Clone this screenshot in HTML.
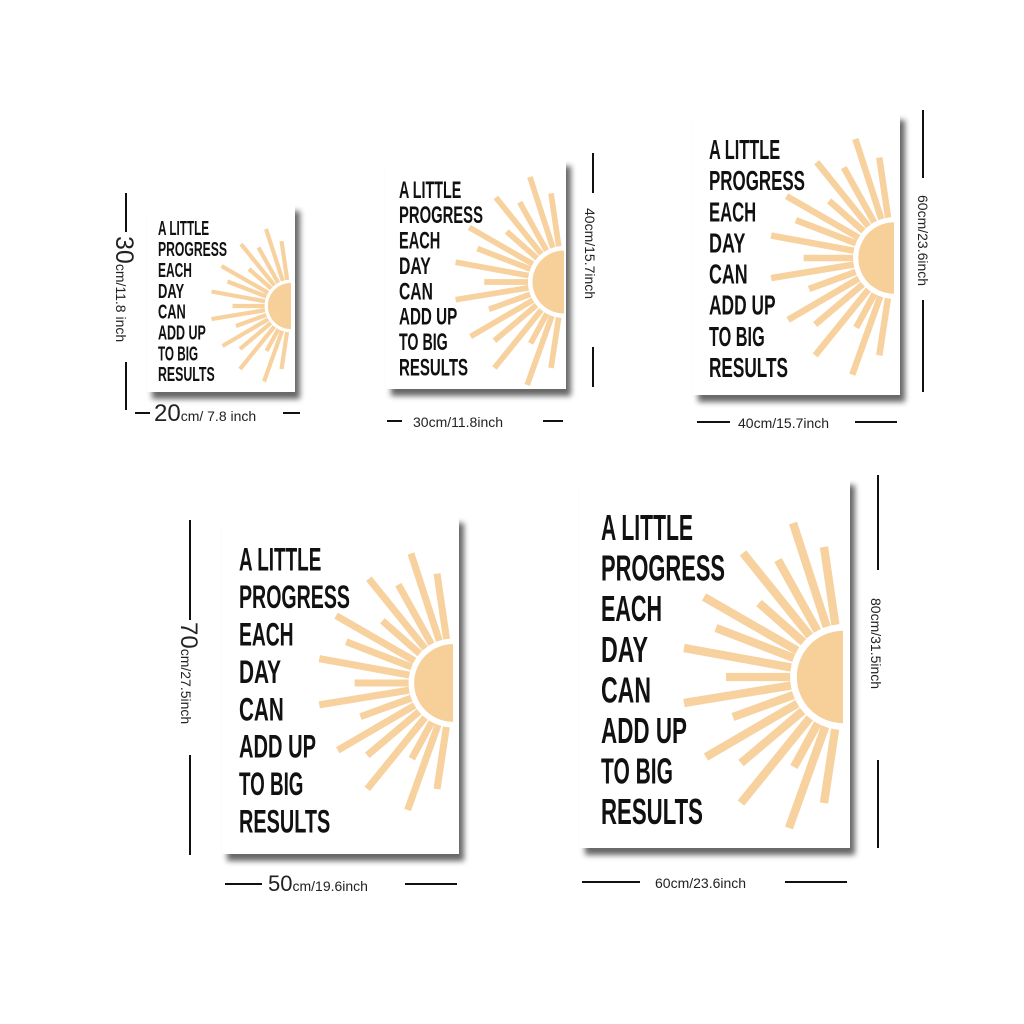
<!DOCTYPE html>
<html><head><meta charset="utf-8"><style>
html,body{margin:0;padding:0;background:#fff;width:1024px;height:1024px;overflow:hidden}
svg{display:block}
.t{font-family:"Liberation Sans Narrow","Liberation Sans",sans-serif;font-weight:bold;font-size:36px;fill:#111}
.l{font-family:"Liberation Sans",sans-serif;font-size:14px;fill:#222}
.ln{stroke:#111;stroke-width:2}
</style></head><body>
<svg width="1024" height="1024" viewBox="0 0 1024 1024" xmlns="http://www.w3.org/2000/svg">
<defs>
<filter id="sh" x="-10%" y="-10%" width="130%" height="130%">
<feGaussianBlur in="SourceAlpha" stdDeviation="3"/>
<feOffset dx="5" dy="7"/>
<feComponentTransfer><feFuncA type="linear" slope="0.6"/></feComponentTransfer>
<feMerge><feMergeNode/><feMergeNode in="SourceGraphic"/></feMerge>
</filter>
<g id="sun">
<path d="M0,-1.05 A1.05,1.05 0 0 0 0,1.05 Z" fill="#f7cf98"/>
<g stroke="#f7d19e" stroke-width="0.19">
<line x1="-0.371" y1="-1.141" x2="-1.136" y2="-3.5"/>
<line x1="-0.174" y1="-1.187" x2="-0.432" y2="-2.955"/>
<line x1="-0.754" y1="-0.934" x2="-2.273" y2="-2.818"/>
<line x1="-0.583" y1="-1.049" x2="-1.477" y2="-2.659"/>
<line x1="-1.04" y1="-0.599" x2="-3.159" y2="-1.818"/>
<line x1="-0.9" y1="-0.793" x2="-1.909" y2="-1.682"/>
<line x1="-1.12" y1="-0.432" x2="-2.886" y2="-1.114"/>
<line x1="-1.181" y1="-0.215" x2="-3.614" y2="-0.659"/>
<line x1="-1.2" y1="0" x2="-2.659" y2="0"/>
<line x1="-1.184" y1="0.193" x2="-3.614" y2="0.591"/>
<line x1="-1.128" y1="0.41" x2="-2.5" y2="0.909"/>
<line x1="-1.037" y1="0.605" x2="-3.114" y2="1.818"/>
<line x1="-0.918" y1="0.774" x2="-2.318" y2="1.955"/>
<line x1="-0.755" y1="0.932" x2="-2.318" y2="2.864"/>
<line x1="-0.574" y1="1.054" x2="-1.114" y2="2.045"/>
<line x1="-0.404" y1="1.129" x2="-1.227" y2="3.432"/>
<line x1="-0.179" y1="1.187" x2="-0.432" y2="2.864"/>
</g>
</g>
</defs>

<!-- Poster 1 -->
<rect x="147" y="204" width="148" height="188" fill="#fff" filter="url(#sh)"/>
<use href="#sun" transform="translate(291,306) scale(22)"/>
<g transform="translate(158,228) scale(0.556)" class="t">
<text y="13" textLength="92" lengthAdjust="spacingAndGlyphs">A LITTLE</text>
<text y="50.5" textLength="124" lengthAdjust="spacingAndGlyphs">PROGRESS</text>
<text y="88" textLength="61" lengthAdjust="spacingAndGlyphs">EACH</text>
<text y="125.5" textLength="47" lengthAdjust="spacingAndGlyphs">DAY</text>
<text y="163" textLength="50" lengthAdjust="spacingAndGlyphs">CAN</text>
<text y="200.5" textLength="86" lengthAdjust="spacingAndGlyphs">ADD UP</text>
<text y="238" textLength="72" lengthAdjust="spacingAndGlyphs">TO BIG</text>
<text y="275.5" textLength="102" lengthAdjust="spacingAndGlyphs">RESULTS</text>
</g>
<line class="ln" x1="126" y1="193" x2="126" y2="232"/>
<line class="ln" x1="126" y1="362" x2="126" y2="410"/>
<text class="l" font-size="16" transform="translate(116,236) rotate(90)"><tspan font-size="25">30</tspan>cm/11.8 inch</text>
<line class="ln" x1="135" y1="413" x2="150" y2="413"/>
<line class="ln" x1="283" y1="413" x2="300" y2="413"/>
<text class="l" font-size="16" x="154" y="421"><tspan font-size="24">20</tspan>cm/ 7.8 inch</text>

<!-- Poster 2 -->
<rect x="386" y="159" width="180" height="230" fill="#fff" filter="url(#sh)"/>
<use href="#sun" transform="translate(564,282) scale(30)"/>
<g transform="translate(399,189) scale(0.677)" class="t">
<text y="13" textLength="92" lengthAdjust="spacingAndGlyphs">A LITTLE</text>
<text y="50.5" textLength="124" lengthAdjust="spacingAndGlyphs">PROGRESS</text>
<text y="88" textLength="61" lengthAdjust="spacingAndGlyphs">EACH</text>
<text y="125.5" textLength="47" lengthAdjust="spacingAndGlyphs">DAY</text>
<text y="163" textLength="50" lengthAdjust="spacingAndGlyphs">CAN</text>
<text y="200.5" textLength="86" lengthAdjust="spacingAndGlyphs">ADD UP</text>
<text y="238" textLength="72" lengthAdjust="spacingAndGlyphs">TO BIG</text>
<text y="275.5" textLength="102" lengthAdjust="spacingAndGlyphs">RESULTS</text>
</g>
<line class="ln" x1="593" y1="153" x2="593" y2="193"/>
<line class="ln" x1="593" y1="347" x2="593" y2="387"/>
<text class="l" font-size="17.5" transform="translate(585,208) rotate(90)">40cm/15.7inch</text>
<line class="ln" x1="387" y1="421" x2="402" y2="421"/>
<line class="ln" x1="543" y1="421" x2="563" y2="421"/>
<text class="l" font-size="16.5" x="413" y="427">30cm/11.8inch</text>

<!-- Poster 3 -->
<rect x="693" y="113" width="207" height="282" fill="#fff" filter="url(#sh)"/>
<use href="#sun" transform="translate(894,258) scale(34)"/>
<g transform="translate(709,149) scale(0.774)" class="t">
<text y="13" textLength="92" lengthAdjust="spacingAndGlyphs">A LITTLE</text>
<text y="53.2" textLength="124" lengthAdjust="spacingAndGlyphs">PROGRESS</text>
<text y="93.4" textLength="61" lengthAdjust="spacingAndGlyphs">EACH</text>
<text y="133.6" textLength="47" lengthAdjust="spacingAndGlyphs">DAY</text>
<text y="173.8" textLength="50" lengthAdjust="spacingAndGlyphs">CAN</text>
<text y="214" textLength="86" lengthAdjust="spacingAndGlyphs">ADD UP</text>
<text y="254.2" textLength="72" lengthAdjust="spacingAndGlyphs">TO BIG</text>
<text y="294.4" textLength="102" lengthAdjust="spacingAndGlyphs">RESULTS</text>
</g>
<line class="ln" x1="923" y1="110" x2="923" y2="178"/>
<line class="ln" x1="923" y1="300" x2="923" y2="392"/>
<text class="l" font-size="13.5" transform="translate(918,195) rotate(90)">60cm/23.6inch</text>
<line class="ln" x1="697" y1="422" x2="730" y2="422"/>
<line class="ln" x1="855" y1="422" x2="897" y2="422"/>
<text class="l" font-size="15.5" x="738" y="428">40cm/15.7inch</text>

<!-- Poster 4 -->
<rect x="222" y="516" width="237" height="338" fill="#fff" filter="url(#sh)"/>
<use href="#sun" transform="translate(453,683) scale(37)"/>
<g transform="translate(239,559) scale(0.895)" class="t">
<text y="13" textLength="92" lengthAdjust="spacingAndGlyphs">A LITTLE</text>
<text y="54.8" textLength="124" lengthAdjust="spacingAndGlyphs">PROGRESS</text>
<text y="96.6" textLength="61" lengthAdjust="spacingAndGlyphs">EACH</text>
<text y="138.4" textLength="47" lengthAdjust="spacingAndGlyphs">DAY</text>
<text y="180.2" textLength="50" lengthAdjust="spacingAndGlyphs">CAN</text>
<text y="222" textLength="86" lengthAdjust="spacingAndGlyphs">ADD UP</text>
<text y="263.8" textLength="72" lengthAdjust="spacingAndGlyphs">TO BIG</text>
<text y="305.6" textLength="102" lengthAdjust="spacingAndGlyphs">RESULTS</text>
</g>
<line class="ln" x1="190" y1="520" x2="190" y2="620"/>
<line class="ln" x1="190" y1="755" x2="190" y2="855"/>
<text class="l" font-size="17" transform="translate(181,622) rotate(90)"><tspan font-size="24">70</tspan>cm/27.5inch</text>
<line class="ln" x1="225" y1="884" x2="262" y2="884"/>
<line class="ln" x1="405" y1="884" x2="457" y2="884"/>
<text class="l" font-size="16.5" x="268" y="891"><tspan font-size="22">50</tspan>cm/19.6inch</text>

<!-- Poster 5 -->
<rect x="580" y="478" width="270" height="370" fill="#fff" filter="url(#sh)"/>
<use href="#sun" transform="translate(843,677) scale(44)"/>
<g transform="translate(601,527)" class="t">
<text y="13" textLength="92" lengthAdjust="spacingAndGlyphs">A LITTLE</text>
<text y="53.6" textLength="124" lengthAdjust="spacingAndGlyphs">PROGRESS</text>
<text y="94.2" textLength="61" lengthAdjust="spacingAndGlyphs">EACH</text>
<text y="134.8" textLength="47" lengthAdjust="spacingAndGlyphs">DAY</text>
<text y="175.4" textLength="50" lengthAdjust="spacingAndGlyphs">CAN</text>
<text y="216" textLength="86" lengthAdjust="spacingAndGlyphs">ADD UP</text>
<text y="256.6" textLength="72" lengthAdjust="spacingAndGlyphs">TO BIG</text>
<text y="297.2" textLength="102" lengthAdjust="spacingAndGlyphs">RESULTS</text>
</g>
<line class="ln" x1="878" y1="475" x2="878" y2="570"/>
<line class="ln" x1="878" y1="760" x2="878" y2="848"/>
<text class="l" font-size="16.5" transform="translate(871,598) rotate(90)">80cm/31.5inch</text>
<line class="ln" x1="582" y1="882" x2="640" y2="882"/>
<line class="ln" x1="785" y1="882" x2="847" y2="882"/>
<text class="l" font-size="16" x="655" y="888">60cm/23.6inch</text>
</svg>
</body></html>
